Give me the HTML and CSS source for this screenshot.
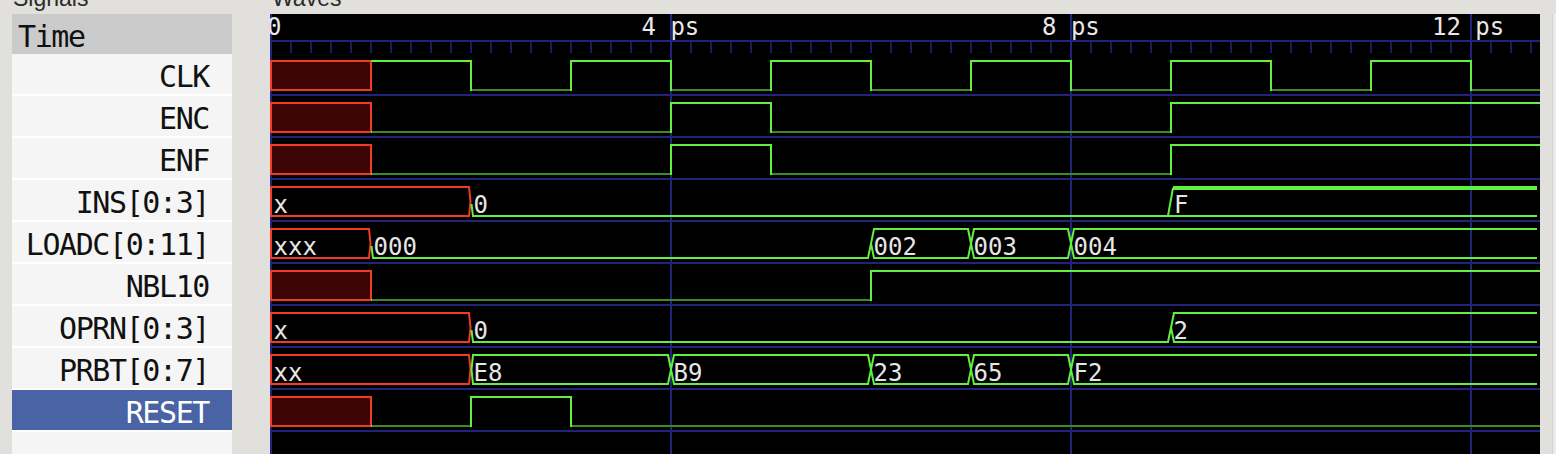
FILE: index.html
```html
<!DOCTYPE html>
<html>
<head>
<meta charset="utf-8">
<link rel="stylesheet" href="styles.css">
</head>
<body>
<div class="app">
  <div class="titles">
    <span class="title t-signals">Signals</span>
    <span class="title t-waves">Waves</span>
  </div>
  <div class="main">
    <div class="signals">
      <div class="sig-head">Time</div>
      <div class="sig">CLK</div>
      <div class="sig">ENC</div>
      <div class="sig">ENF</div>
      <div class="sig">INS[0:3]</div>
      <div class="sig">LOADC[0:11]</div>
      <div class="sig">NBL10</div>
      <div class="sig">OPRN[0:3]</div>
      <div class="sig">PRBT[0:7]</div>
      <div class="sig selected">RESET</div>
    </div>
    <div class="waves">
      <svg class="wave-svg" width="1270" height="440" viewBox="0 0 1270 440" xmlns="http://www.w3.org/2000/svg">
        <defs>
          <pattern id="ticks" x="0" y="0" width="20" height="11" patternUnits="userSpaceOnUse">
            <rect x="0.25" y="0" width="1.5" height="11" class="grid"/>
          </pattern>
        </defs>
        <!-- grid -->
        <g class="grid">
          <rect x="0" y="26" width="1270" height="2"/>
          <rect x="0" y="0" width="2" height="440"/>
          <rect x="400" y="0" width="2" height="440"/>
          <rect x="800" y="0" width="2" height="440"/>
          <rect x="1200" y="0" width="2" height="440"/>
          <rect x="0" y="80" width="1270" height="2"/>
          <rect x="0" y="122" width="1270" height="2"/>
          <rect x="0" y="164" width="1270" height="2"/>
          <rect x="0" y="206" width="1270" height="2"/>
          <rect x="0" y="248" width="1270" height="2"/>
          <rect x="0" y="290" width="1270" height="2"/>
          <rect x="0" y="332" width="1270" height="2"/>
          <rect x="0" y="374" width="1270" height="2"/>
          <rect x="0" y="416" width="1270" height="2"/>
        </g>
        <rect x="0" y="28" width="1270" height="11" fill="url(#ticks)"/>
        <text class="ruler" x="-3" y="21">0</text>
        <text class="ruler" x="371.5" y="21">4 ps</text>
        <text class="ruler" x="772" y="21">8 ps</text>
        <text class="ruler" x="1162" y="21">12 ps</text>

        <!-- CLK -->
        <rect class="xbit" x="1" y="47" width="100" height="29"/>
        <path class="hi" d="M101,47 H201 V76 H301 V47 H401 V76 H501 V47 H601 V76 H701 V47 H801 V76 H901 V47 H1001 V76 H1101 V47 H1201 V76 H1270"/>
        <path class="lo" d="M202,76 H300 M402,76 H500 M602,76 H700 M802,76 H900 M1002,76 H1100 M1202,76 H1270"/>

        <!-- ENC -->
        <rect class="xbit" x="1" y="89" width="100" height="29"/>
        <path class="hi" d="M101,118 H401 V89 H501 V118 H901 V89 H1270"/>
        <path class="lo" d="M102,118 H400 M502,118 H900"/>

        <!-- ENF -->
        <rect class="xbit" x="1" y="131" width="100" height="29"/>
        <path class="hi" d="M101,160 H401 V131 H501 V160 H901 V131 H1270"/>
        <path class="lo" d="M102,160 H400 M502,160 H900"/>

        <!-- INS[0:3] -->
        <path class="xbus" d="M1,173 H199 L200.5,187.5 L199,202 H1 Z"/>
        <path class="hi" d="M201.5,190 L203,202 H1267"/>
        <path class="hi" d="M898,202 L903,174"/>
        <path class="hi thick" d="M903,174 H1267"/>
        <text class="val" x="3.5" y="198.5">x</text>
        <text class="val" x="203.5" y="198.5">0</text>
        <text class="val" x="904" y="198.5">F</text>

        <!-- LOADC[0:11] -->
        <path class="xbus" d="M1,215 H99 L100.5,229.5 L99,244 H1 Z"/>
        <path class="hi" d="M101.5,232 L103,244 H598 L601,229.5"/>
        <path class="hi" d="M601,229.5 L604,215 H698 L701,229.5 L698,244 H604 Z"/>
        <path class="hi" d="M701,229.5 L704,215 H798 L801,229.5 L798,244 H704 Z"/>
        <path class="hi" d="M801,229.5 L804,215 H1267 M801,229.5 L804,244 H1267"/>
        <text class="val" x="3.5" y="240.5">xxx</text>
        <text class="val" x="103.5" y="240.5">000</text>
        <text class="val" x="603.5" y="240.5">002</text>
        <text class="val" x="703.5" y="240.5">003</text>
        <text class="val" x="803.5" y="240.5">004</text>

        <!-- NBL10 -->
        <rect class="xbit" x="1" y="257" width="100" height="29"/>
        <path class="hi" d="M101,286 H601 V257 H1270"/>
        <path class="lo" d="M102,286 H600"/>

        <!-- OPRN[0:3] -->
        <path class="xbus" d="M1,299 H199 L200.5,313.5 L199,328 H1 Z"/>
        <path class="hi" d="M201.5,316 L203,328 H898 L901,313.5"/>
        <path class="hi" d="M901,313.5 L904,299 H1267 M901,313.5 L904,328 H1267"/>
        <text class="val" x="3.5" y="324.5">x</text>
        <text class="val" x="203.5" y="324.5">0</text>
        <text class="val" x="903.5" y="324.5">2</text>

        <!-- PRBT[0:7] -->
        <path class="xbus" d="M1,341 H199 L200.5,355.5 L199,370 H1 Z"/>
        <path class="hi" d="M201.5,355.5 L203,341 H398 L401,355.5 L398,370 H203 Z"/>
        <path class="hi" d="M401,355.5 L404,341 H598 L601,355.5 L598,370 H404 Z"/>
        <path class="hi" d="M601,355.5 L604,341 H698 L701,355.5 L698,370 H604 Z"/>
        <path class="hi" d="M701,355.5 L704,341 H798 L801,355.5 L798,370 H704 Z"/>
        <path class="hi" d="M801,355.5 L804,341 H1267 M801,355.5 L804,370 H1267"/>
        <text class="val" x="3.5" y="366.5">xx</text>
        <text class="val" x="203.5" y="366.5">E8</text>
        <text class="val" x="403.5" y="366.5">B9</text>
        <text class="val" x="603.5" y="366.5">23</text>
        <text class="val" x="703.5" y="366.5">65</text>
        <text class="val" x="803.5" y="366.5">F2</text>

        <!-- RESET -->
        <rect class="xbit" x="1" y="383" width="100" height="29"/>
        <path class="hi" d="M101,412 H201 V383 H301 V412 H1270"/>
        <path class="lo" d="M102,412 H200 M302,412 H1270"/>
      </svg>
    </div>
    <div class="vscroll"><div class="vscroll-edge"></div></div>
  </div>
</div>
</body>
</html>
```

FILE: styles.css
```css
html, body {
  margin: 0;
  padding: 0;
}
body {
  background: #e1e0dc;
  width: 1556px;
  height: 454px;
  overflow: hidden;
}
.app {
  display: flex;
  flex-direction: column;
  width: 1556px;
  height: 454px;
}
.titles {
  height: 14px;
  display: grid;
  grid-template-columns: 270px 1fr;
  align-items: start;
  overflow: hidden;
  font-family: "Liberation Sans", Arial, sans-serif;
  font-size: 23px;
  color: #2b2b2b;
}
.title {
  line-height: 26px;
  margin-top: -15px;
}
.t-signals { padding-left: 13px; }
.t-waves { padding-left: 2px; }

.main {
  display: flex;
  height: 440px;
}
.signals {
  margin-left: 12px;
  width: 220px;
  height: 440px;
  background: #f5f5f5;
  font-family: "DejaVu Sans Mono", monospace;
  font-size: 30px;
  letter-spacing: -1.4px;
  color: #111;
}
.sig-head {
  height: 40px;
  box-sizing: border-box;
  background: #cbcbcb;
  padding: 7px 0 0 6px;
  line-height: 32px;
}
.sig {
  height: 42px;
  box-sizing: border-box;
  border-bottom: 2px solid #ffffff;
  padding: 7px 23px 0 0;
  line-height: 32px;
  text-align: right;
}
.sig.selected {
  background: #4a63a5;
  color: #ffffff;
}
.waves {
  margin-left: 38px;
  width: 1270px;
  height: 440px;
  background: #000;
}
.wave-svg {
  display: block;
}
.vscroll {
  width: 16px;
  height: 440px;
  display: flex;
  justify-content: flex-end;
}
.vscroll-edge {
  width: 3px;
  border-left: 1px solid #d2d1cd;
  background: #ebebea;
}

/* waveform drawing */
.grid { fill: #22247a; }
.ruler {
  font-family: "DejaVu Sans Mono", monospace;
  font-size: 24px;
  fill: #e8e8e8;
}
.val {
  font-family: "DejaVu Sans Mono", monospace;
  font-size: 24px;
  fill: #e6e6e6;
}
.hi {
  fill: none;
  stroke: #62f040;
  stroke-width: 2;
}
.hi.thick { stroke-width: 4; }
.lo {
  fill: none;
  stroke: #3a8c28;
  stroke-width: 2;
}
.xbit {
  fill: #3c0404;
  stroke: #f23a25;
  stroke-width: 2;
}
.xbus {
  fill: none;
  stroke: #f23a25;
  stroke-width: 2;
}
```
